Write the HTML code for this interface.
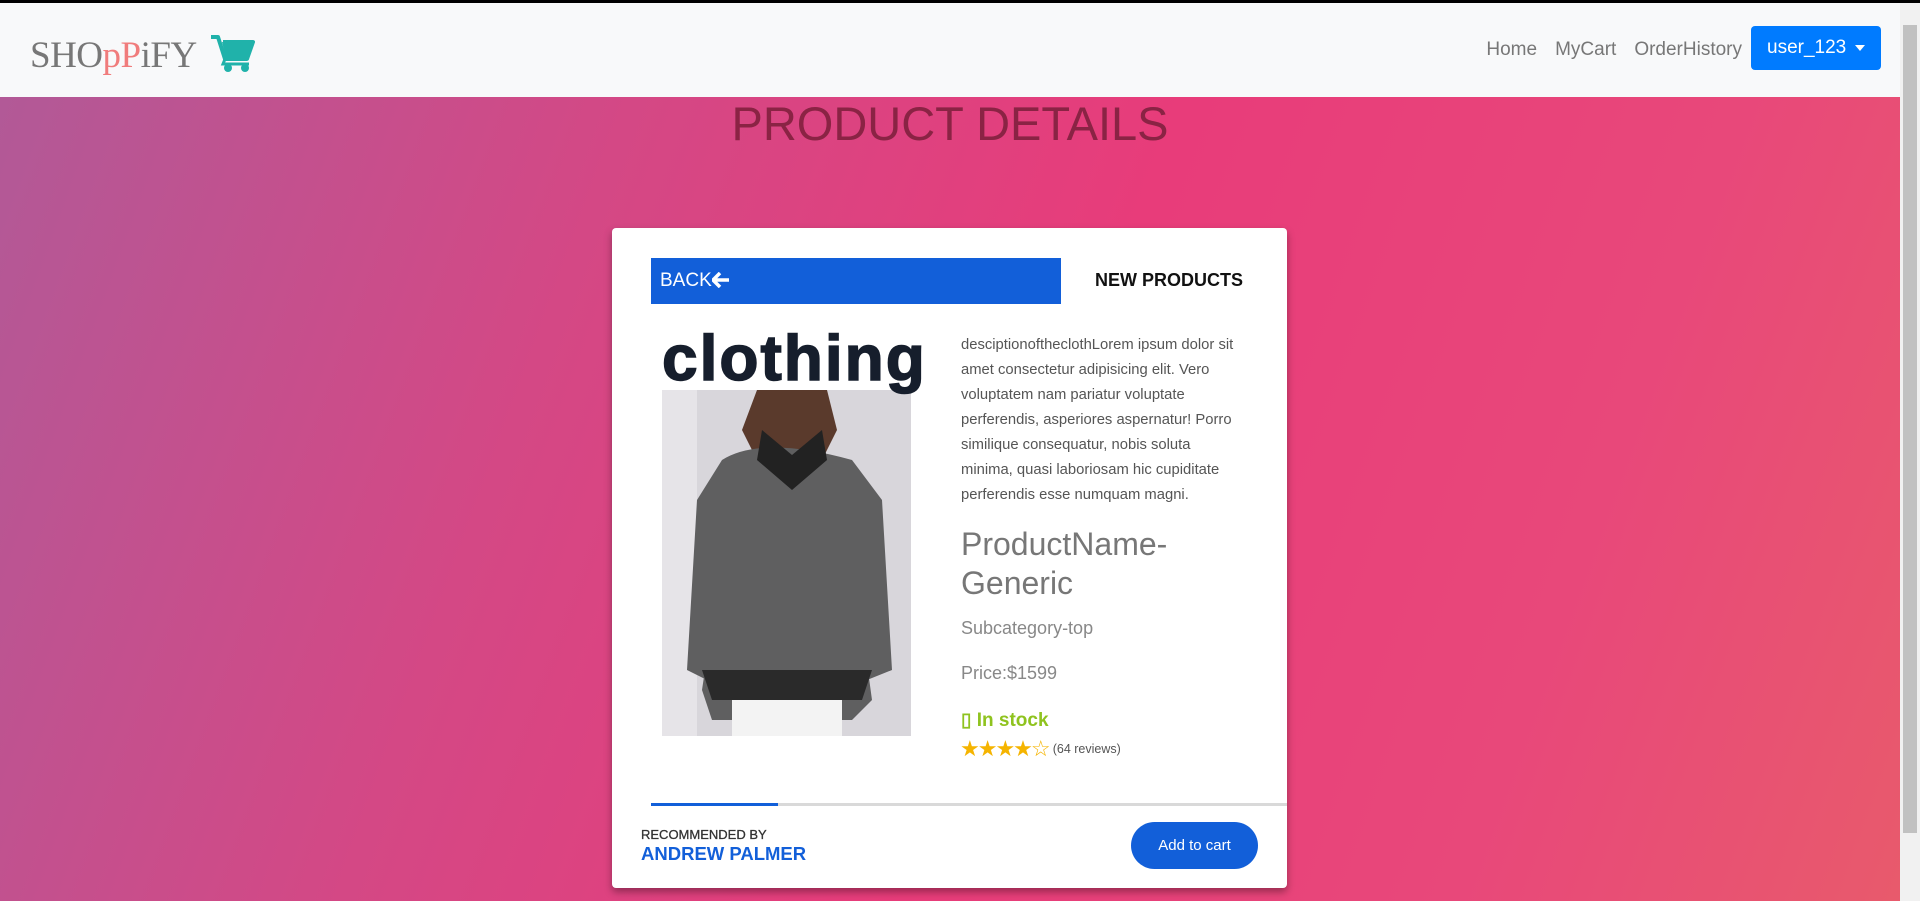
<!DOCTYPE html>
<html><head><meta charset="utf-8"><style>
*{margin:0;padding:0;box-sizing:border-box}
html,body{width:1920px;height:901px;overflow:hidden;font-family:"Liberation Sans",Arial,sans-serif}
body{background:#000}
.page{position:absolute;left:0;top:3px;width:1900px;height:898px;background:linear-gradient(110deg,#b05a98 0%,#d44885 30%,#e83c7a 55%,#e8487a 80%,#e85a6c 100%)}
.nav{position:absolute;left:0;top:0;width:1900px;height:94px;background:#f8f9fa}
.logo{position:absolute;left:30px;top:31px;font-family:"Liberation Serif",serif;font-size:37px;color:#777;letter-spacing:-0.5px}
.logo .p{color:#f07c7c}
.cart{position:absolute;left:211px;top:32px}
.links{position:absolute;right:158px;top:36px;font-size:19px;color:#777}
.links span{margin-left:18px}
.user{position:absolute;left:1751px;top:23px;width:130px;height:44px;background:#007bff;border-radius:4px;color:#fff;font-size:19px;line-height:44px;padding-left:16px}
.user:after{content:"";position:absolute;right:16px;top:19px;border:5px solid transparent;border-top:6px solid #fff}
.sb{position:absolute;left:1900px;top:3px;width:20px;height:898px;background:#f1f1f1}
.sb div{position:absolute;left:3px;top:22px;width:14px;height:808px;background:#c1c1c1}
h1{position:absolute;left:0;width:1900px;top:93px;text-align:center;font-weight:normal;font-size:47px;color:#8a2344}
.card{position:absolute;left:612px;top:225px;width:675px;height:660px;background:#fff;border-radius:4px;box-shadow:0 4px 8px rgba(0,0,0,.35)}
.back{position:absolute;left:39px;top:30px;width:410px;height:46px;background:#125fd9;color:#fff;font-size:19px;line-height:46px;padding-left:9px}
.np{position:absolute;left:483px;top:42px;font-size:18px;font-weight:bold;color:#111}
.cl{position:absolute;left:50px;top:93px;font-size:64px;font-weight:bold;color:#161e2c;letter-spacing:2px;-webkit-text-stroke:1.5px #161e2c}
.img{position:absolute;left:50px;top:162px;width:249px;height:346px;background:#dcdadf;overflow:hidden}
.desc{position:absolute;left:349px;top:105px;width:275px;font-size:14.8px;line-height:25px;color:#555}
.pn{position:absolute;left:349px;top:297px;font-size:32px;line-height:39px;color:#777}
.sub{position:absolute;left:349px;top:390px;font-size:18px;color:#888}
.pr{position:absolute;left:349px;top:435px;font-size:18px;color:#888}
.st{position:absolute;left:349px;top:481px;font-size:19px;font-weight:bold;color:#8fc31f}
.rv{position:absolute;left:348px;top:508px;font-size:22px;color:#f5b400;letter-spacing:-2px}
.rv span{font-size:12.5px;color:#555;letter-spacing:0;vertical-align:3px}
.bar{position:absolute;left:39px;top:575px;width:636px;height:3px;background:#d9d9d9}
.bar div{width:127px;height:3px;background:#125fd9}
.rec{position:absolute;left:29px;top:599px;font-size:13px;color:#333;-webkit-text-stroke:0.3px #333}
.ap{position:absolute;left:29px;top:615px;font-size:18.5px;font-weight:bold;color:#125fd9}
.add{position:absolute;left:519px;top:594px;width:127px;height:47px;border-radius:24px;background:#125fd9;color:#fff;font-size:15px;line-height:47px;text-align:center}
</style></head><body>
<div class="page">
<div class="nav">
<div class="logo">SHO<span class="p">pP</span>iFY</div>
<svg class="cart" width="44" height="38" viewBox="0 0 44 38"><path d="M0 2h7l7 22h22l6-17H12" fill="none" stroke="#20b2aa" stroke-width="4" stroke-linejoin="round"/><path d="M11 7h31l-6 17H15z" fill="#20b2aa"/><path d="M14 24l-2 5h26" fill="none" stroke="#20b2aa" stroke-width="3"/><circle cx="17" cy="33" r="4" fill="#20b2aa"/><circle cx="34" cy="33" r="4" fill="#20b2aa"/></svg>
<div class="links"><span>Home</span><span>MyCart</span><span>OrderHistory</span></div>
<div class="user">user_123</div>
</div>
<h1>PRODUCT DETAILS</h1>
<div class="card">
<div class="back">BACK<svg width="18" height="16" viewBox="0 0 18 16" style="vertical-align:-2px"><path d="M8 1L1 8l7 7M1 8h16" fill="none" stroke="#fff" stroke-width="3.5"/></svg></div>
<div class="np">NEW PRODUCTS</div>
<div class="img"><svg width="249" height="346" viewBox="0 0 249 346">
<rect width="249" height="346" fill="#d8d6db"/><rect x="0" y="0" width="35" height="346" fill="#e6e4e8"/>
<path d="M95 0h70l10 40-20 40H100L80 40z" fill="#5a3a2c"/>
<path d="M60 70q40-25 130 0l30 40 10 170-25 10-10-90 15 110-20 20H50l-10-30 15-100-10 90-20-10 10-170z" fill="#5f5f60"/>
<path d="M100 40l30 25 30-25 5 30-35 30-35-30z" fill="#222"/>
<path d="M40 280h170l-10 30H50z" fill="#2a2a2a"/>
<rect x="70" y="310" width="110" height="36" fill="#f3f3f3"/>
</svg></div>
<div class="cl">clothing</div>
<div class="desc">desciptionoftheclothLorem ipsum dolor sit amet consectetur adipisicing elit. Vero voluptatem nam pariatur voluptate perferendis, asperiores aspernatur! Porro similique consequatur, nobis soluta minima, quasi laboriosam hic cupiditate perferendis esse numquam magni.</div>
<div class="pn">ProductName-<br>Generic</div>
<div class="sub">Subcategory-top</div>
<div class="pr">Price:$1599</div>
<div class="st">▯ In stock</div>
<div class="rv">★★★★☆ <span>(64 reviews)</span></div>
<div class="bar"><div></div></div>
<div class="rec">RECOMMENDED BY</div>
<div class="ap">ANDREW PALMER</div>
<div class="add">Add to cart</div>
</div>
</div>
<div class="sb"><div></div></div>
</body></html>
